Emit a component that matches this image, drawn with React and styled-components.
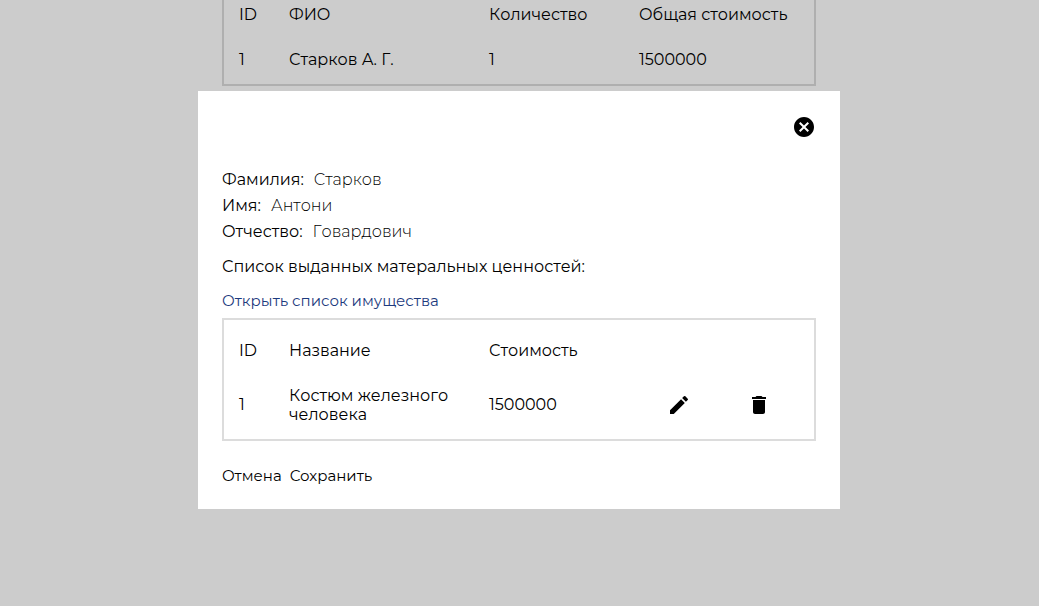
import React from "react";
import styled, { createGlobalStyle } from "styled-components";
import { MdCancel, MdDelete, MdEdit } from "react-icons/md";

const GlobalStyle = createGlobalStyle`
  * { box-sizing: border-box; }
  body {
    margin: 0;
    background: #cccccc;
    color: #000;
    font-family: Montserrat, Inter, "Open Sans", sans-serif;
    font-kerning: none;
    font-size: 16px;
    line-height: 19px;
  }
`;

const Page = styled.div`
  position: relative;
  min-height: 100vh;
  margin-right: 1px;
`;

const Summary = styled.main`
  max-width: 642px;
  margin: 0 auto;
  padding: 0 24px;
`;

const TableFrame = styled.div`
  border: 2px solid ${(p) => (p.$dimmed ? "#afafaf" : "#dcdcdc")};
  border-top-width: ${(p) => (p.$cut ? "0" : "2px")};
  padding: ${(p) => (p.$cut ? "5px" : "21px")} 15px 15px;
`;

const Table = styled.table`
  width: 100%;
  table-layout: fixed;
  border-collapse: collapse;
`;

const Column = styled.col`
  width: ${(p) => p.$width};
`;

const HeadCell = styled.th`
  padding: 0 0 26px;
  font-weight: 400;
  text-align: left;
`;

const Cell = styled.td`
  padding: 0;
  vertical-align: middle;
  text-align: ${(p) => (p.$center ? "center" : "left")};
`;

const Overlay = styled.div`
  position: absolute;
  inset: 0;
  padding: 15vh 24px 24px;
`;

const Dialog = styled.section`
  max-width: 642px;
  margin: 0 auto;
  padding: 24px;
  background: #fff;
`;

const DialogHeader = styled.header`
  display: flex;
  justify-content: flex-end;
  margin-bottom: 28px;
`;

const IconButton = styled.button`
  display: inline-flex;
  padding: 0;
  border: 0;
  background: none;
  color: inherit;
  font-size: 24px;
  vertical-align: middle;
  cursor: pointer;
`;

const Fields = styled.dl`
  margin: 0;
`;

const Field = styled.div`
  display: flex;
  gap: 10px;
  line-height: 26px;
`;

const FieldName = styled.dt`
  font-weight: 400;
`;

const FieldValue = styled.dd`
  margin: 0;
  font-weight: 300;
`;

const ListTitle = styled.h2`
  margin: 12px 0 15px;
  font-size: 16px;
  font-weight: 400;
`;

const ListLink = styled.a`
  display: block;
  margin-bottom: 8px;
  color: #1c3a7e;
  font-size: 15px;
  text-decoration: none;
`;

const Actions = styled.footer`
  display: flex;
  gap: 8px;
  margin-top: 25px;
`;

const TextButton = styled.button`
  padding: 0;
  border: 0;
  background: none;
  color: inherit;
  font-family: inherit;
  font-size: 15px;
  line-height: 19px;
  cursor: pointer;
`;

const person = [
  ["Фамилия:", "Старков"],
  ["Имя:", "Антони"],
  ["Отчество:", "Говардович"],
];

const items = [{ id: 1, name: "Костюм железного человека", price: 1500000 }];

function SummaryTable() {
  return (
    <TableFrame $dimmed $cut>
      <Table>
        <colgroup>
          <Column $width="50px" />
          <Column $width="200px" />
          <Column $width="150px" />
          <Column $width="auto" />
        </colgroup>
        <thead>
          <tr>
            <HeadCell>ID</HeadCell>
            <HeadCell>ФИО</HeadCell>
            <HeadCell>Количество</HeadCell>
            <HeadCell>Общая стоимость</HeadCell>
          </tr>
        </thead>
        <tbody>
          <tr>
            <Cell>1</Cell>
            <Cell>Старков А. Г.</Cell>
            <Cell>1</Cell>
            <Cell>1500000</Cell>
          </tr>
        </tbody>
      </Table>
    </TableFrame>
  );
}

function ItemsTable() {
  return (
    <TableFrame>
      <Table>
        <colgroup>
          <Column $width="50px" />
          <Column $width="200px" />
          <Column $width="150px" />
          <Column $width="auto" />
          <Column $width="auto" />
        </colgroup>
        <thead>
          <tr>
            <HeadCell>ID</HeadCell>
            <HeadCell>Название</HeadCell>
            <HeadCell>Стоимость</HeadCell>
            <HeadCell colSpan={2} />
          </tr>
        </thead>
        <tbody>
          {items.map((item) => (
            <tr key={item.id}>
              <Cell>{item.id}</Cell>
              <Cell>{item.name}</Cell>
              <Cell>{item.price}</Cell>
              <Cell $center>
                <IconButton type="button" aria-label="Изменить">
                  <MdEdit />
                </IconButton>
              </Cell>
              <Cell $center>
                <IconButton type="button" aria-label="Удалить">
                  <MdDelete />
                </IconButton>
              </Cell>
            </tr>
          ))}
        </tbody>
      </Table>
    </TableFrame>
  );
}

export default function App() {
  return (
    <Page>
      <GlobalStyle />
      <Summary>
        <SummaryTable />
      </Summary>
      <Overlay>
        <Dialog role="dialog" aria-modal="true">
          <DialogHeader>
            <IconButton type="button" aria-label="Закрыть">
              <MdCancel />
            </IconButton>
          </DialogHeader>
          <Fields>
            {person.map(([name, value]) => (
              <Field key={name}>
                <FieldName>{name}</FieldName>
                <FieldValue>{value}</FieldValue>
              </Field>
            ))}
          </Fields>
          <ListTitle>Список выданных матеральных ценностей:</ListTitle>
          <ListLink href="#items">Открыть список имущества</ListLink>
          <ItemsTable />
          <Actions>
            <TextButton type="button">Отмена</TextButton>
            <TextButton type="button">Сохранить</TextButton>
          </Actions>
        </Dialog>
      </Overlay>
    </Page>
  );
}
